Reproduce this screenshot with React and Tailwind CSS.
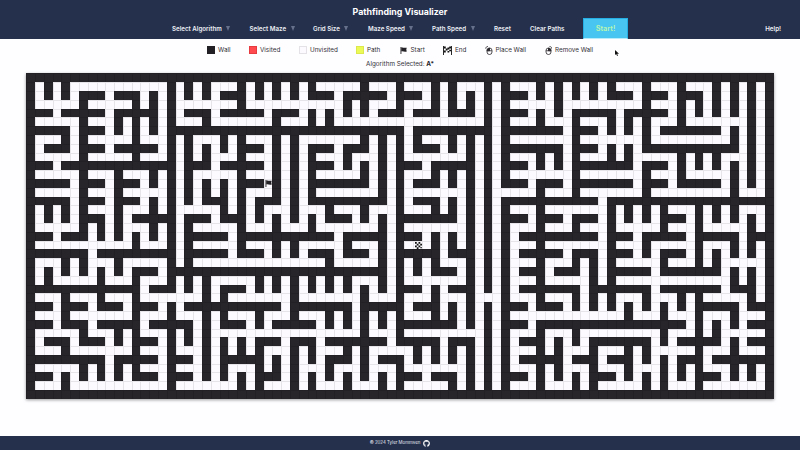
import React from "react";
import { FaGithub } from "react-icons/fa";

const COLS = 85;

// Open corridors of each maze row, as column ranges.
const CORRIDORS = [
  "",
  "1 3 5-15 17 19 21-23 25 27 29 31 33-37 39-41 43-45 47 49-51 53 55-57 59 61 63 65 67-69 71-73 75-77 79 81 83",
  "1 3 5 9 13 15 17 19 21 25 27 29 31 35 41 45 47 49 51 53 57 59 61 63 65 69 73 77 79 81 83",
  "1-5 7-11 13 15 17-23 25-35 37 39-41 43-45 47 49 51 53 55-59 61-69 71-73 75 77 79 81 83",
  "3 9 15 17 21 27 31 33 35 37 39 43 47 51 53 57 59 61 67 73 75 77 79 81 83",
  "1-5 7-9 11 13 15 17-19 21-27 29-31 33 35-51 53 55-57 59-61 63-65 67 69 71-73 75-81 83",
  "5 9 11 13 15 43 53 61 65 67 69 71 79 81 83",
  "1-3 5 7-11 13-15 17 19-21 23 25-27 29 31-37 39 41 43 45-47 49 51 53 55-61 63-69 71-79 81 83",
  "1 5 9 15 17 19 21 23 27 29 31 35 39 41 43 47 49 51 53 61 65 67 69 81 83",
  "1-5 7-11 13-15 17 19 21-23 25-27 29 31 33-35 37-39 41 43-49 51 53 55-57 59 61 63-65 67 69-73 75 77 79-81 83",
  "3 17 21 27 29 31 35 37 39 41 45 51 53 57 59 61 69 73 75 77 79 81 83",
  "1-5 7-9 11-13 15 17 19-23 25-27 29 31 33-37 39 41 43-45 47 49 51 53 55-61 63-69 71-73 75-79 81 83",
  "5 9 13 15 17 19 21 23 27 29 31 39 41 43 47 49 51 53 57 61 69 73 79 81 83",
  "1-5 7-9 11-15 17 19 21 23 25-27 29 31 33-39 41 43-49 51 53-57 59-61 63-69 71-79 81-83",
  "5 9 13 15 17 19 23 25 29 31 41 43 47 49 51 53 65",
  "1 3 5 7-9 11-13 15 17-21 23 25 27-29 31-33 35-37 39-41 43-45 47 49 51 53 55-57 59-65 67 69 71 73-75 77 79 81-83",
  "1 3 5 9 11 17 21 25 27 29 31 33 37 39 41 49 51 53 57 61 65 67 69 71 75 77 79 81 83",
  "1-5 7 9 11-13 15 17 19-23 25-27 29-31 33-39 41 43-49 51 53 55-57 59-61 63-65 67-71 73-75 77-81 83",
  "3 7 9 11 13 15 17 23 35 41 45 47 49 51 53 55 65 69 75 81",
  "1-11 13-15 17 19-23 25-27 29 31-35 37-39 41 43-45 47 49 51 53 55-57 59-65 67-69 71-75 77-79 81 83",
  "7 17 23 27 29 31 35 39 41 47 51 53 55 61 65 69 71 75 77 79 81 83",
  "1-3 5 7-9 11-15 17 19-33 35-39 41 43 45 47-49 51 53 55-57 59-61 63 65 67-71 73-75 77 79-83",
  "1 3 5 7 9 11 15 41 43 45 49 51 53 55 59 63 65 71 79 81 83",
  "1 3-7 9-11 13-15 17 19 21-25 27 29 31 33 35 37-39 41 43-49 51 53 55-57 59-63 65 67-79 81 83",
  "13 17 19 21 25 27 29 31 33 35 37 39 41 45 47 51 53 55 63 71 79 83",
  "1-3 5-7 9-11 13-19 21 23-29 31-37 39-41 43-45 47-49 51-53 55-57 59-61 63 65 67-69 71-73 75 77-81 83",
  "3 7 11 15 17 29 37 43 47 49 51 53 57 61 63 65 67 69 71 73 75 81",
  "1-3 5-11 13-15 17-19 21 23-25 27-29 31-33 35 37 39 41 43-45 47 49 51 53 55-67 69-71 73-75 77-79 81-83",
  "3 7 13 19 21 25 27 33 35 37 39 41 49 51 53 57 75 77 79 81",
  "1-5 7-9 11 13-15 17 19 21-37 39-41 43-51 53 55-57 59-61 63-71 73-75 77 79-83",
  "1 5 9 11 15 17 19 21 23 25 29 33 41 47 51 53 55 59 61 63 71 73 79 81",
  "1-3 5-11 13-15 17-19 21 23 25 27-29 31 33-35 37 39-43 45 47 49 51 53 55-57 59 61-63 65-67 69 71-75 77-79 81-83",
  "9 15 19 21 27 29 31 33 37 39 43 45 47 49 51 53 55 61 65 69 71 73 77",
  "1-5 7 9 11 13-15 17-19 21 23-25 27 29 31-33 35-37 39-41 43-49 51 53 55-57 59 61-63 65-67 69-71 73 75 77-79 81 83",
  "3 5 7 9 11 15 19 21 23 25 29 31 33 35 37 39 41 45 49 51 53 57 59 61 63 67 69 71 73 75 79 81 83",
  "1-3 5-15 17-23 25 27-29 31 33-35 37-39 41 43-47 49 51 53 55-57 59-61 63 65-69 71 73-75 77-83",
  "",
];

const START = { row: 12, col: 27 };
const END = { row: 19, col: 44 };

const maze = CORRIDORS.map((line) => {
  const open = Array(COLS).fill(false);
  line
    .split(" ")
    .filter(Boolean)
    .forEach((range) => {
      const [from, to = from] = range.split("-").map(Number);
      for (let c = from; c <= to; c++) open[c] = true;
    });
  return open;
});

function FlagIcon({ className }) {
  return (
    <svg viewBox="0 0 14 14" className={className} fill="#232125">
      <path d="M1 0h1.800v14H1z" />
      <path d="M2.500 1C5 0 7 2.500 13.500 1.500L12.500 5l1 4C8 10.500 6 7.500 2.500 9z" />
    </svg>
  );
}

function CheckeredIcon({ className }) {
  return (
    <svg viewBox="0 0 18 18" className={className} fill="#111">
      <path d="M0 0h1.800v18H0zM16.200 0H18v18h-1.800z" />
      <path d="M2 1h3.500v4H2zM9 3h3.500v4H9zM5.500 5H9v4H5.500zM12.500 1H16v4h-3.500zM2 9h3.500v4H2zM9 10h3.500v3H9zM12.500 7.500H16v3h-3.500z" />
    </svg>
  );
}

function Cell({ open, row, col }) {
  const isStart = row === START.row && col === START.col;
  const isEnd = row === END.row && col === END.col;
  return (
    <div
      className={
        open
          ? "flex items-start justify-center overflow-hidden border-t border-l border-[#e6e4e9] bg-[#fcfafe]"
          : "border-t border-l border-[#222024] bg-[#272529]"
      }
    >
      {isStart && <FlagIcon className="size-[7px] shrink-0" />}
      {isEnd && (
        <svg viewBox="0 0 8 8" className="size-[7px] shrink-0" fill="#111">
          <path d="M0 0h2v2H0zM4 0h2v2H4zM2 2h2v2H2zM6 2h2v2H6zM0 4h2v2H0zM4 4h2v2H4zM2 6h2v2H2zM6 6h2v1H6z" />
        </svg>
      )}
    </div>
  );
}

function MenuItem({ label, className }) {
  return (
    <div className={`flex items-center gap-[4.500px] ${className}`}>
      <span>{label}</span>
      <span className="h-0 w-0 border-x-[2.5px] border-t-[5px] border-x-transparent border-t-[#66708a]" />
    </div>
  );
}

function MouseIcon({ removing }) {
  return (
    <svg viewBox="0 0 16 18" className="h-[9px] w-[8px]" fill="none" stroke="#29272b" strokeWidth="1.6">
      <rect x="4" y="4" width="10" height="13" rx="5" />
      <path d="M4 9.500h10M9 4v5.500" />
      {removing ? (
        <>
          <path d="M9 4.500c3 0 5 2 5 5H9z" fill="#29272b" />
          <path d="M11 1c3 0 4.500 1.500 4.500 4.500" />
        </>
      ) : (
        <>
          <path d="M9 4.500c-3 0-5 2-5 5h5z" fill="#29272b" />
          <path d="M6 1C3 1 1.500 2.500 1.500 5.500" />
        </>
      )}
    </svg>
  );
}

function Legend({ icon, label, className }) {
  return (
    <div className={`flex items-center ${className}`}>
      {icon}
      <span>{label}</span>
    </div>
  );
}

export default function App() {
  return (
    <div className="flex h-[450px] w-[800px] flex-col overflow-hidden bg-[#fefdff] font-['Inter',sans-serif] text-[#333136]">
      <header className="h-[39.4px] shrink-0 bg-[#25304d] text-[#eef0f5]">
        <h1 className="h-[18px] pt-[5px] text-center text-[8.8px] leading-[13px] font-bold text-white">
          Pathfinding Visualizer
        </h1>
        <nav className="flex h-[21.400px] items-center pl-[172px] text-[6.2px] leading-none font-semibold">
          <MenuItem label="Select Algorithm" className="w-[77.500px]" />
          <MenuItem label="Select Maze" className="w-[63.500px]" />
          <MenuItem label="Grid Size" className="w-[55px]" />
          <MenuItem label="Maze Speed" className="w-[64px]" />
          <MenuItem label="Path Speed" className="w-[62px]" />
          <span className="w-[36px]">Reset</span>
          <span className="w-[53px]">Clear Paths</span>
          <button className="flex h-[21.400px] w-[45px] items-center justify-center border border-[#25aee4] border-b-[#b9ecfa] bg-[#48c6f1] text-[7.3px] font-semibold text-[#b9f5b0]">
            Start!
          </button>
          <span className="ml-auto pr-[19px]">Help!</span>
        </nav>
      </header>

      <div className="relative h-[34px] shrink-0">
        <div className="flex h-[20.600px] items-center pt-[1px] pl-[207px] text-[6.3px] leading-none">
          <Legend className="w-[42px] gap-[3px]" label="Wall" icon={<i className="size-2 bg-[#222024]" />} />
          <Legend className="w-[50px] gap-[3px]" label="Visited" icon={<i className="size-2 border border-[#e63b41] bg-[#ff4b50]" />} />
          <Legend className="w-[57px] gap-[3px]" label="Unvisited" icon={<i className="size-2 border border-[#e4e2e7] bg-[#fcfafe]" />} />
          <Legend className="w-[44px] gap-[3px]" label="Path" icon={<i className="size-2 border border-[#dce84b] bg-[#ecfa58]" />} />
          <Legend className="w-[43px] gap-[3.500px]" label="Start" icon={<FlagIcon className="size-[7px]" />} />
          <Legend className="w-[42px] gap-[3px]" label="End" icon={<CheckeredIcon className="size-[9px]" />} />
          <Legend className="w-[59px] gap-[2.500px]" label="Place Wall" icon={<MouseIcon />} />
          <Legend className="gap-[3px]" label="Remove Wall" icon={<MouseIcon removing />} />
        </div>
        <p className="text-center text-[6.3px] leading-[8px]">
          Algorithm Selected: <b className="text-[#1c1a1e]">A*</b>
        </p>
        <svg viewBox="0 0 8 12" className="absolute top-[11px] left-[614.500px] h-[6px] w-[4px]">
          <path d="M0 0v10l2.400-2 1.800 4 1.800-1-1.800-3.500H8z" fill="#111" />
        </svg>
      </div>

      <main className="mx-auto grid h-[325.6px] shrink-0 grid-cols-[repeat(85,8.8px)] grid-rows-[repeat(37,8.8px)] shadow-[0_1px_3px_rgba(0,0,0,0.4)]">
        {maze.map((cells, row) =>
          cells.map((open, col) => <Cell key={`${row}-${col}`} open={open} row={row} col={col} />),
        )}
      </main>

      <footer className="mt-auto flex h-[14px] shrink-0 items-center justify-center gap-[3px] bg-[#25304d] pt-[1px] text-[4.4px] leading-none text-[#e6e9f1]">
        <span>© 2024 Tyler Mommsen</span>
        <FaGithub className="size-[7px] text-white" />
      </footer>
    </div>
  );
}
